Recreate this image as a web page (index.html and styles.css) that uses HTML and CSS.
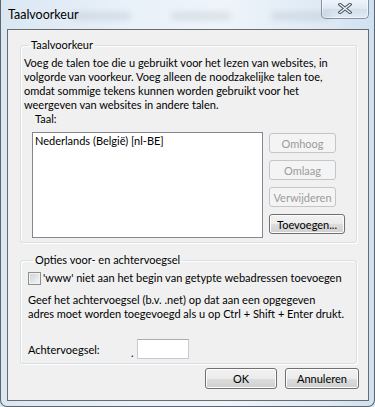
FILE: index.html
```html
<!DOCTYPE html>
<html>
<head>
    <title>Taalvoorkeur</title>
    <link rel="stylesheet" href="styles.css">
</head>
<body>
    <div class="window">
        <div class="titlebar">
            <span class="title">Taalvoorkeur</span>
            <div class="ghost-tabs">
                <span class="ghost"></span>
                <span class="ghost"></span>
                <span class="ghost"></span>
            </div>
            <button class="close" title="Sluiten">
                <svg width="14" height="11" viewBox="0 0 14 11">
                    <path d="M2 1.5 L12 9.5 M12 1.5 L2 9.5" stroke="#4a5563" stroke-width="3.4" stroke-linecap="square" fill="none"/>
                    <path d="M2 1.5 L12 9.5 M12 1.5 L2 9.5" stroke="#eef1f5" stroke-width="1.4" stroke-linecap="square" fill="none"/>
                </svg>
            </button>
        </div>

        <div class="client">
            <fieldset class="group group-lang">
                <legend>Taalvoorkeur</legend>
                <p class="intro">Voeg de talen toe die u gebruikt voor het lezen van websites, in<br>volgorde van voorkeur. Voeg alleen de noodzakelijke talen toe,<br>omdat sommige tekens kunnen worden gebruikt voor het<br>weergeven van websites in andere talen.</p>
                <div class="field-label">Taal:</div>
                <div class="lang-row">
                    <div class="listbox">
                        <div class="list-item">Nederlands (België) [nl-BE]</div>
                    </div>
                    <div class="side-buttons">
                        <button class="btn" disabled>Omhoog</button>
                        <button class="btn" disabled>Omlaag</button>
                        <button class="btn" disabled>Verwijderen</button>
                        <button class="btn btn-wide">Toevoegen...</button>
                    </div>
                </div>
            </fieldset>

            <fieldset class="group group-affix">
                <legend>Opties voor- en achtervoegsel</legend>
                <label class="check">
                    <span class="checkbox"></span>
                    <span>'www' niet aan het begin van getypte webadressen toevoegen</span>
                </label>
                <p class="hint">Geef het achtervoegsel (b.v. .net) op dat aan een opgegeven<br>adres moet worden toegevoegd als u op Ctrl + Shift + Enter drukt.</p>
                <div class="suffix-row">
                    <span class="suffix-label">Achtervoegsel:</span>
                    <span class="dot">.</span>
                    <input type="text" class="suffix-input">
                </div>
            </fieldset>

            <div class="dialog-buttons">
                <button class="btn btn-ok">OK</button>
                <button class="btn btn-cancel">Annuleren</button>
            </div>
        </div>
    </div>
</body>
</html>
```

FILE: styles.css
```css
* { box-sizing: border-box; }
body { margin: 0; font-family: Lato, "Noto Sans", sans-serif; font-size: 11px; color: #000; background: #dce8f4; }

.window { width: 375px; height: 407px; border: 1px solid #5d6670; border-top: none; border-radius: 0 0 7px 7px;
    background: linear-gradient(90deg, #dae7f3 0%, #e9f1f9 35%, #eef4fa 60%, #dde9f5 88%, #cfe1f1 100%); overflow: hidden; }

.titlebar { height: 29px; display: flex; align-items: flex-start; position: relative; }
.title { margin: 7px 0 0 7px; line-height: 15px; font-size: 12.5px; color: #000; position: relative; z-index: 1; }
.ghost-tabs { position: absolute; left: 70px; top: 12px; display: flex; gap: 40px; filter: blur(3px); opacity: 0.18; }
.ghost { width: 60px; height: 8px; background: #7a8796; border-radius: 4px; }
.close { margin-left: auto; margin-right: 5px; margin-top: -1px; width: 48px; height: 20px; padding: 0; border: 1px solid #8393a6;
    border-top: none; border-radius: 0 0 5px 5px; background: linear-gradient(#f1f5fa, #dfe8f2 50%, #d2deeb 51%, #e1eaf4);
    box-shadow: inset 0 0 0 1px rgba(255,255,255,0.6); display: flex; align-items: center; justify-content: center; }

.client { margin: 0 5px 0 6px; width: 362px; height: 372px; border: 1px solid #6b6b6b; background: #f0f0f0; padding: 0 11px 0 12px; }

.group { border: 1px solid #d5dfe5; border-radius: 3px; box-shadow: inset 1px 1px 0 #fff, 1px 1px 0 #fff; margin: 0; padding: 0; min-width: 0; }
.group legend { margin-left: 5px; padding: 0 2px; line-height: 14px; }
.group-lang { margin-top: 8px; padding: 0 0 4px 3px; }
.group-affix { margin-top: 10px; padding: 0 0 4px 7px; }

.intro { margin: 4px 0 0; line-height: 14px; white-space: nowrap; }
.field-label { margin: 0 0 0 11px; line-height: 14px; }

.lang-row { display: flex; gap: 6px; margin: 6px 0 0 8px; }
.listbox { width: 231px; height: 106px; background: #fff; border: 1px solid #828790; padding: 1px 2px; }
.list-item { line-height: 14px; }
.side-buttons { display: flex; flex-direction: column; gap: 7px; padding-top: 1px; }

.btn { font-family: inherit; font-size: 11px; width: 67px; height: 20px; padding: 0; color: #000; border: 1px solid #707070; border-radius: 3px;
    background: linear-gradient(#f2f2f2 0%, #ebebeb 50%, #dddddd 51%, #cfcfcf 100%); box-shadow: inset 0 0 0 1px #fcfcfc; }
.btn:disabled { color: #9b9b9b; border-color: #c3c6c9; background: #f4f4f4; box-shadow: none; }
.btn-wide { width: 76px; }

.check { display: flex; align-items: center; gap: 2px; margin-top: 4px; line-height: 14px; white-space: nowrap; }
.checkbox { width: 13px; height: 13px; border: 1px solid #8e8f8f; background: linear-gradient(135deg, #cdd0d4, #f7f7f7);
    box-shadow: inset 0 0 0 1px #f2f2f2; }
.hint { margin: 8px 0 0; line-height: 14px; white-space: nowrap; }

.suffix-row { display: flex; align-items: center; margin-top: 18px; }
.suffix-label { width: 103px; }
.dot { width: 6px; padding-top: 6px; }
.suffix-input { width: 52px; height: 20px; border: 1px solid #c8cacf; border-top-color: #abadb3; background: #fff; padding: 0 3px; font: inherit; }

.dialog-buttons { display: flex; justify-content: flex-end; gap: 8px; margin: 4px -2px 0 0; }
.btn-ok { width: 72px; height: 21px; }
.btn-cancel { width: 74px; height: 21px; }
```
